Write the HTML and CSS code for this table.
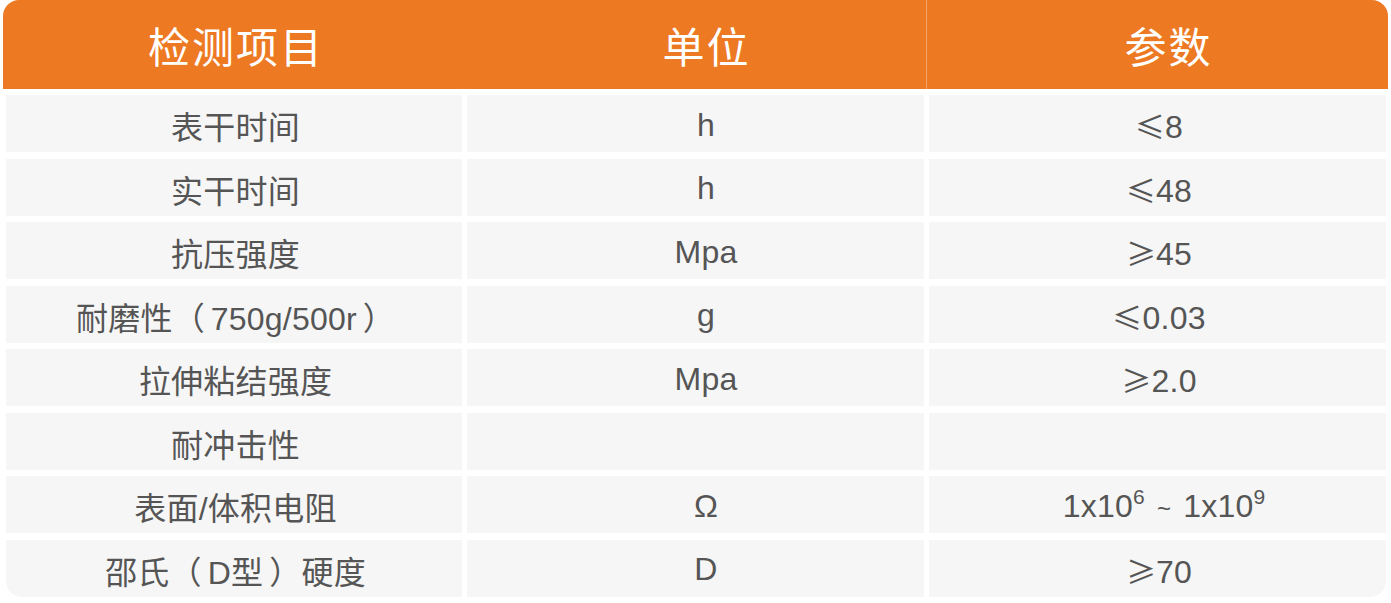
FILE: index.html
```html
<!DOCTYPE html>
<html lang="zh-CN">
<head>
<meta charset="utf-8">
<title>检测项目</title>
<link rel="stylesheet" href="styles.css">
</head>
<body>
<div class="spec-table">
  <div class="head">
    <div class="hcell c1"><span>检测项目</span></div>
    <div class="hcell c2"><span>单位</span></div>
    <div class="hcell c3"><span>参数</span></div>
  </div>
  <div class="body">
    <div class="cell c1"><span>表干时间</span></div><div class="cell c2"><span>h</span></div><div class="cell c3"><span><span class="sym">≤</span>8</span></div>
    <div class="cell c1"><span>实干时间</span></div><div class="cell c2"><span>h</span></div><div class="cell c3"><span><span class="sym">≤</span>48</span></div>
    <div class="cell c1"><span>抗压强度</span></div><div class="cell c2"><span>Mpa</span></div><div class="cell c3"><span><span class="sym">≥</span>45</span></div>
    <div class="cell c1"><span>耐磨性<span class="pl">（</span>750g/500r<span class="pr">）</span></span></div><div class="cell c2"><span>g</span></div><div class="cell c3"><span><span class="sym">≤</span>0.03</span></div>
    <div class="cell c1"><span>拉伸粘结强度</span></div><div class="cell c2"><span>Mpa</span></div><div class="cell c3"><span><span class="sym">≥</span>2.0</span></div>
    <div class="cell c1"><span>耐冲击性</span></div><div class="cell c2"></div><div class="cell c3"></div>
    <div class="cell c1"><span>表面/体积电阻</span></div><div class="cell c2"><span>Ω</span></div><div class="cell c3"><span class="range">1x10<sup>6</sup> <span class="tilde">~</span> 1x10<sup>9</sup></span></div>
    <div class="cell c1 bl"><span>邵氏<span class="pl">（</span>D型<span class="pr">）</span>硬度</span></div><div class="cell c2"><span>D</span></div><div class="cell c3 br"><span><span class="sym">≥</span>70</span></div>
  </div>
</div>
</body>
</html>
```

FILE: styles.css
```css
html, body {
  margin: 0;
  padding: 0;
  background: #ffffff;
}
body {
  font-family: "Liberation Sans", "Noto Sans CJK SC", sans-serif;
}
.spec-table {
  margin-left: 3px;
  width: 1385px;
}
.head {
  display: grid;
  grid-template-columns: 462px 461px 462px;
  height: 89px;
  background: #ed7922;
  border-radius: 16px 16px 0 0;
}
.hcell {
  display: flex;
  align-items: center;
  justify-content: center;
  color: #ffffff;
  font-size: 42px;
  letter-spacing: 2px;
}
.hcell.c1 { padding-left: 4px; }
.hcell.c2 { padding-left: 22px; }
.hcell.c3 {
  border-left: 1px solid #f3a466;
  padding-left: 22px;
}
.body {
  display: grid;
  grid-template-columns: 456px 457px 457px;
  grid-auto-rows: 57px;
  column-gap: 5px;
  row-gap: 6.5px;
  margin-top: 6px;
  margin-left: 3px;
}
.cell {
  background: #f6f6f6;
  display: flex;
  align-items: center;
  justify-content: center;
  color: #555555;
  font-size: 32px;
  letter-spacing: 0.2px;
  padding-top: 3px;
  white-space: pre;
}
.cell.c1 { padding-left: 3px; }
.cell.c2 { padding-left: 21px; }
.cell.c3 { padding-left: 3px; }
.bl { border-bottom-left-radius: 16px; }
.br { border-bottom-right-radius: 16px; }
.sym {
  font-family: "Noto Sans CJK SC", sans-serif;
  font-size: 30px;
}
.pl { margin: 0 6px 0 0; }
.pr { margin: 0 0 0 6px; }
.range sup {
  font-size: 21px;
  line-height: 0;
  vertical-align: 0;
  position: relative;
  top: -13px;
}
.tilde {
  font-size: 24px;
  margin: 0 3px;
}
.range { padding-left: 10px; }
```
